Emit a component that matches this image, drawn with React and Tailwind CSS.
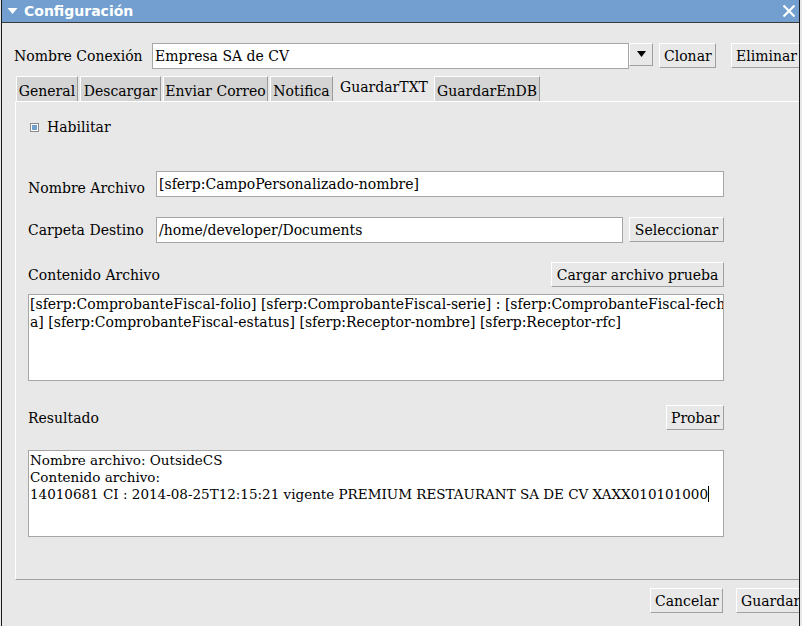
import React from 'react';

// Configuration dialog: "GuardarTXT" tab of a connection profile
const Btn = ({ children, className = '' }) => (
  <button
    className={`h-[25px] px-[4px] bg-[#e8e8e8] border border-t-white border-l-white border-r-[#a0a0a0] border-b-[#a0a0a0] text-[14px] leading-none whitespace-nowrap ${className}`}
  >
    {children}
  </button>
);

const Field = ({ value, className = '' }) => (
  <div
    className={`h-[26px] bg-white border border-[#a6a6a6] flex items-center px-[2px] text-[14px] whitespace-nowrap overflow-hidden ${className}`}
  >
    {value}
  </div>
);

const tabs = [
  { name: 'General', w: 'w-[62px]' },
  { name: 'Descargar', w: 'w-[81px]' },
  { name: 'Enviar Correo', w: 'w-[105px]' },
  { name: 'Notifica', w: 'w-[63px]' },
  { name: 'GuardarTXT', w: 'w-[98px]', active: true },
  { name: 'GuardarEnDB', w: 'w-[106px]' },
];

export default function App() {
  return (
    <div className="w-[802px] h-[626px] bg-[#e8e8e8] overflow-hidden font-['DejaVu_Serif',serif] text-black leading-[16px]">
      <div className="ml-[1px] w-[799px] h-[626px] border-x border-[#1a1a1a] overflow-hidden flex flex-col">
        {/* title bar */}
        <div className="h-[23px] shrink-0 bg-[#729fcf] border-b border-[#3a3a3a] flex items-center justify-between pl-[5px] pr-[3px] font-['DejaVu_Sans',sans-serif] font-bold text-white text-[14px]">
          <div className="flex items-center gap-[6px]">
            <svg width="11" height="8" viewBox="0 0 11 8">
              <path d="M0.5 1 L10.5 1 L5.5 7 Z" fill="white" />
            </svg>
            <span>Configuración</span>
          </div>
          <svg width="14" height="14" viewBox="0 0 14 14">
            <path d="M1.5 1.5 L12.5 12.5 M12.5 1.5 L1.5 12.5" stroke="white" strokeWidth="2.2" />
          </svg>
        </div>

        <div className="w-[840px] pl-[12px]">
          {/* connection selector */}
          <div className="mt-[21px] flex items-center h-[23px]">
            <span className="text-[14px] w-[138px]">Nombre Conexión</span>
            <div className="flex">
              <Field value="Empresa SA de CV" className="w-[477px] h-[23px]" />
              <div className="w-[24px] h-[23px] bg-[#e8e8e8] border border-t-white border-l-white border-r-[#a0a0a0] border-b-[#a0a0a0] flex items-center justify-center">
                <svg width="9" height="6" viewBox="0 0 9 6">
                  <path d="M0 0 L9 0 L4.5 6 Z" fill="black" />
                </svg>
              </div>
            </div>
            <Btn className="ml-[6px] w-[57px] h-[23px]">Clonar</Btn>
            <Btn className="ml-[15px] w-[71px] h-[23px]">Eliminar</Btn>
          </div>

          {/* tab strip */}
          <div className="mt-[6px] ml-[2px] flex items-end h-[28px] gap-[2px]">
            {tabs.map((t) =>
              t.active ? (
                <div
                  key={t.name}
                  className={`${t.w} -mr-[1px] h-[28px] pt-[6px] text-[14px] flex justify-center items-start`}
                >
                  {t.name}
                </div>
              ) : (
                <div
                  key={t.name}
                  className={`${t.w} h-[25px] pt-[4px] text-[14px] flex items-center justify-center bg-[#d4d4d4] border-t border-l border-white border-r border-r-[#9a9a9a]`}
                >
                  {t.name}
                </div>
              )
            )}
          </div>

          {/* tab panel */}
          <div className="ml-[1px] h-[479px] border-t border-l border-white border-b border-b-[#a0a0a0] pl-[12px] pt-[17px]">
            <label className="flex items-center gap-[8px] text-[14px] h-[16px]">
              <span className="ml-[2px] w-[9px] h-[9px] border border-[#8a8a8a] bg-white flex items-center justify-center">
                <span className="w-[5px] h-[5px] bg-[#729fcf]" />
              </span>
              Habilitar
            </label>

            <div className="mt-[36px] flex items-center h-[26px]">
              <span className="text-[14px] w-[128px] pt-[7px]">Nombre Archivo</span>
              <Field value="[sferp:CampoPersonalizado-nombre]" className="w-[568px]" />
            </div>

            <div className="mt-[20px] flex items-center h-[25px]">
              <span className="text-[14px] w-[128px]">Carpeta Destino</span>
              <Field value="/home/developer/Documents" className="w-[467px] h-[23px]" />
              <Btn className="ml-[6px] w-[95px]">Seleccionar</Btn>
            </div>

            <div className="mt-[20px] flex items-center justify-between w-[696px] h-[25px]">
              <span className="text-[14px]">Contenido Archivo</span>
              <Btn className="w-[173px]">Cargar archivo prueba</Btn>
            </div>

            <div className="mt-[7px] w-[696px] h-[87px] bg-white border border-[#a6a6a6] px-[1px] text-[14px] leading-[18px] whitespace-nowrap overflow-hidden">
              [sferp:ComprobanteFiscal-folio] [sferp:ComprobanteFiscal-serie] : [sferp:ComprobanteFiscal-fech
              <br />
              a] [sferp:ComprobanteFiscal-estatus] [sferp:Receptor-nombre] [sferp:Receptor-rfc]
            </div>

            <div className="mt-[24px] flex items-center justify-between w-[696px] h-[25px]">
              <span className="text-[14px]">Resultado</span>
              <Btn className="w-[58px]">Probar</Btn>
            </div>

            <div className="mt-[20px] w-[696px] h-[87px] bg-white border border-[#a6a6a6] px-[1px] pt-[1px] text-[13.5px] leading-[17px]">
              Nombre archivo: OutsideCS
              <br />
              Contenido archivo:
              <br />
              14010681 CI : 2014-08-25T12:15:21 vigente PREMIUM RESTAURANT SA DE CV XAXX010101000
              <span className="inline-block w-[1px] h-[16px] bg-black align-[-3px]" />
            </div>
          </div>

          {/* dialog buttons */}
          <div className="mt-[8px] flex w-[786px] justify-end gap-[13px]">
            <Btn className="w-[73px]">Cancelar</Btn>
            <Btn className="w-[64px]">Guardar</Btn>
          </div>
        </div>
      </div>
    </div>
  );
}
